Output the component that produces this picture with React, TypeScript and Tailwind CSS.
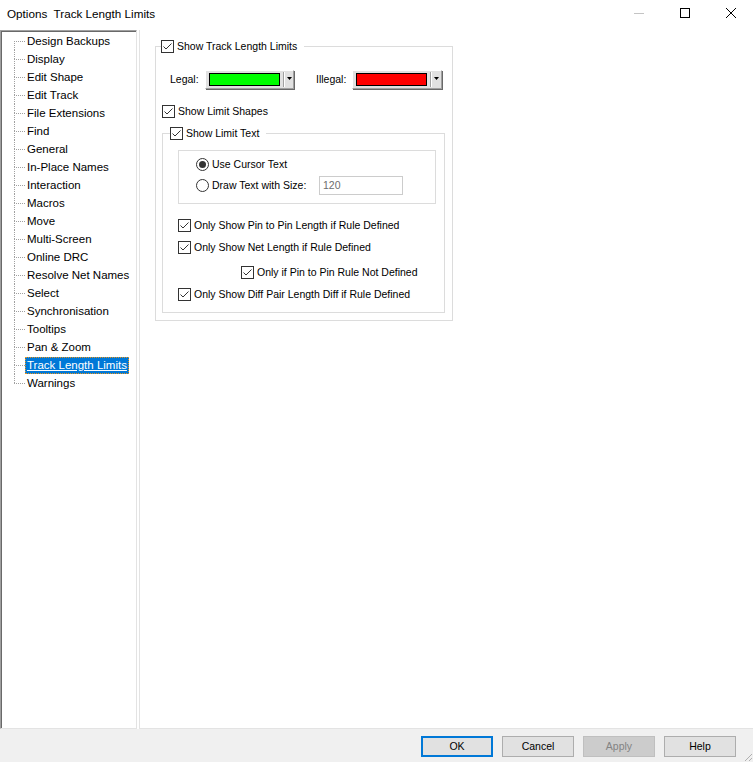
import React from "react";

const TREE_ITEMS = [
  "Design Backups",
  "Display",
  "Edit Shape",
  "Edit Track",
  "File Extensions",
  "Find",
  "General",
  "In-Place Names",
  "Interaction",
  "Macros",
  "Move",
  "Multi-Screen",
  "Online DRC",
  "Resolve Net Names",
  "Select",
  "Synchronisation",
  "Tooltips",
  "Pan & Zoom",
  "Track Length Limits",
  "Warnings",
];
const SELECTED = "Track Length Limits";

function Check({ checked = true }: { checked?: boolean }) {
  return (
    <span className="flex h-[13px] w-[13px] shrink-0 items-center justify-center border border-[#333333] bg-white">
      {checked && (
        <svg width="11" height="11" viewBox="0 0 11 11">
          <path d="M1.5 5.5 L4 8 L9.5 2.5" fill="none" stroke="#333333" strokeWidth="1" />
        </svg>
      )}
    </span>
  );
}

function Radio({ on = false }: { on?: boolean }) {
  return (
    <span className="flex h-[13px] w-[13px] shrink-0 items-center justify-center rounded-full border border-[#333333] bg-white">
      {on && <span className="h-[7px] w-[7px] rounded-full bg-[#333333]" />}
    </span>
  );
}

function CheckRow({ label, className = "" }: { label: string; className?: string }) {
  return (
    <div className={`flex h-[13px] items-center gap-[3px] ${className}`}>
      <Check />
      <span className="whitespace-nowrap">{label}</span>
    </div>
  );
}

function ColorCombo({ color, className = "" }: { color: string; className?: string }) {
  return (
    <div
      className={`flex h-[19px] items-center border border-t-white border-l-white border-r-[#a0a0a0] border-b-[#a0a0a0] bg-[#e1e1e1] shadow-[1px_1px_0_#696969] ${className}`}
    >
      <span className="ml-[3px] h-[13px] w-[71px] border border-black" style={{ background: color }} />
      <span className="ml-[3px] h-[15px] w-[2px] border-l border-r border-l-[#a0a0a0] border-r-white" />
      <span className="flex flex-1 items-center justify-center pb-[2px]">
        <svg width="5" height="3" viewBox="0 0 5 3">
          <path d="M0 0 H5 L2.5 3 Z" fill="#000" />
        </svg>
      </span>
    </div>
  );
}

function Btn({ children, kind = "normal" }: { children: React.ReactNode; kind?: "normal" | "primary" | "disabled" }) {
  const cls =
    kind === "primary"
      ? "border-2 border-[#0078d7] bg-[#e1e1e1] text-black"
      : kind === "disabled"
      ? "border border-[#bfbfbf] bg-[#cccccc] text-[#838383]"
      : "border border-[#adadad] bg-[#e1e1e1] text-black";
  return <div className={`flex h-[21px] w-[72px] items-center justify-center ${cls}`}>{children}</div>;
}

function TreeRow({ label, index }: { label: string; index: number }) {
  const last = index === TREE_ITEMS.length - 1;
  const selected = label === SELECTED;
  return (
    <div className="flex h-[18px] items-center">
      <div className="flex h-full w-[24px] flex-col pl-[13px]">
        <div className={index > 0 ? "h-[9px] border-l border-dotted border-[#a0a0a0]" : "h-[9px]"} />
        <div
          className={
            last
              ? "h-[9px] w-[11px] border-t border-dotted border-[#a0a0a0]"
              : "h-[9px] w-[11px] border-t border-l border-dotted border-[#a0a0a0]"
          }
        />
      </div>
      {selected ? (
        <span className="h-[17px] whitespace-nowrap bg-[#0078d7] px-[2px] leading-[17px] text-white underline outline outline-1 outline-dotted outline-[#e8941a] -outline-offset-1">
          {label}
        </span>
      ) : (
        <span className="h-[17px] whitespace-nowrap px-[2px] leading-[17px] text-black">{label}</span>
      )}
    </div>
  );
}

export default function App() {
  return (
    <div className="flex h-[762px] w-[753px] flex-col overflow-hidden bg-white font-['Liberation_Sans',Arial,sans-serif] text-black">
      {/* title bar */}
      <div className="flex h-[30px] shrink-0 items-center">
        <div className="flex-1 whitespace-pre pb-[2px] pl-[7px] text-[11.7px]">Options  Track Length Limits</div>
        <div className="flex h-full items-start pt-[8px]">
          <div className="flex w-[46px] justify-center pt-[5px]">
            <svg width="10" height="1" viewBox="0 0 10 1">
              <rect width="10" height="1" fill="#c4c4c4" />
            </svg>
          </div>
          <div className="flex w-[46px] justify-center">
            <svg width="10" height="10" viewBox="0 0 10 10">
              <rect x="0.5" y="0.5" width="9" height="9" fill="none" stroke="#000" strokeWidth="1" />
            </svg>
          </div>
          <div className="flex w-[45px] justify-center">
            <svg width="10" height="10" viewBox="0 0 10 10">
              <path d="M0 0 L10 10 M10 0 L0 10" stroke="#000" strokeWidth="1" />
            </svg>
          </div>
        </div>
      </div>

      {/* body */}
      <div className="flex h-[699px] shrink-0">
        <div className="h-full w-[137px] border-t border-l border-r border-b border-t-[#a0a0a0] border-l-[#a0a0a0] border-r-[#e3e3e3] border-b-[#e3e3e3] pt-[1px] text-[11.5px] shadow-[inset_1px_1px_0_#696969]">
          {TREE_ITEMS.map((t, i) => (
            <TreeRow key={t} label={t} index={i} />
          ))}
        </div>

        <div className="ml-[2px] h-full flex-1 border-l border-b border-[#e3e3e3] pl-[15px] pt-[10px] text-[10.5px]">
          <fieldset className="m-0 w-[298px] border border-[#dcdcdc] p-0">
            <legend className="ml-[5px] pr-[7px]">
              <CheckRow label="Show Track Length Limits" />
            </legend>
            <div className="pb-[7px] pl-[6px]">
              <div className="ml-[8px] mt-[17px] flex h-[19px] items-center">
                <span className="w-[35px]">Legal:</span>
                <ColorCombo color="#00ff00" className="w-[89px]" />
                <span className="ml-[22px] w-[36px]">Illegal:</span>
                <ColorCombo color="#ff0000" className="w-[90px]" />
              </div>
              <CheckRow label="Show Limit Shapes" className="mt-[16px]" />

              <fieldset className="m-0 mt-[9px] w-[283px] border border-[#dcdcdc] p-0">
                <legend className="ml-[7px] pr-[7px]">
                  <CheckRow label="Show Limit Text" />
                </legend>
                <div className="pb-[11px]">
                  <div className="ml-[15px] mt-[10px] h-[54px] w-[258px] border border-[#dcdcdc] pl-[17px] pt-[7px]">
                    <div className="flex h-[13px] items-center gap-[3px]">
                      <Radio on />
                      <span>Use Cursor Text</span>
                    </div>
                    <div className="mt-[5px] flex h-[19px] items-center">
                      <Radio />
                      <span className="ml-[3px] w-[107px] whitespace-nowrap">Draw Text with Size:</span>
                      <div className="flex h-[19px] w-[84px] items-center border border-[#cccccc] bg-white pl-[3px] text-[#6d6d6d]">
                        120
                      </div>
                    </div>
                  </div>
                  <CheckRow label="Only Show Pin to Pin Length if Rule Defined" className="ml-[15px] mt-[15px]" />
                  <CheckRow label="Only Show Net Length if Rule Defined" className="ml-[15px] mt-[9px]" />
                  <CheckRow label="Only if Pin to Pin Rule Not Defined" className="ml-[78px] mt-[12px]" />
                  <CheckRow label="Only Show Diff Pair Length Diff if Rule Defined" className="ml-[15px] mt-[9px]" />
                </div>
              </fieldset>
            </div>
          </fieldset>
        </div>
      </div>

      {/* button bar */}
      <div className="flex h-[33px] shrink-0 items-start justify-end bg-[#f0f0f0] pt-[7px] text-[10.5px]">
        <div className="flex gap-[9px]">
          <Btn kind="primary">OK</Btn>
          <Btn>Cancel</Btn>
          <Btn kind="disabled">Apply</Btn>
          <Btn>Help</Btn>
        </div>
        <svg className="ml-[5px] mt-auto" width="12" height="12" viewBox="0 0 12 12">
          <path d="M11 4 L4 11 M11 8 L8 11" stroke="#b0b0b0" strokeWidth="1" />
        </svg>
      </div>
    </div>
  );
}
